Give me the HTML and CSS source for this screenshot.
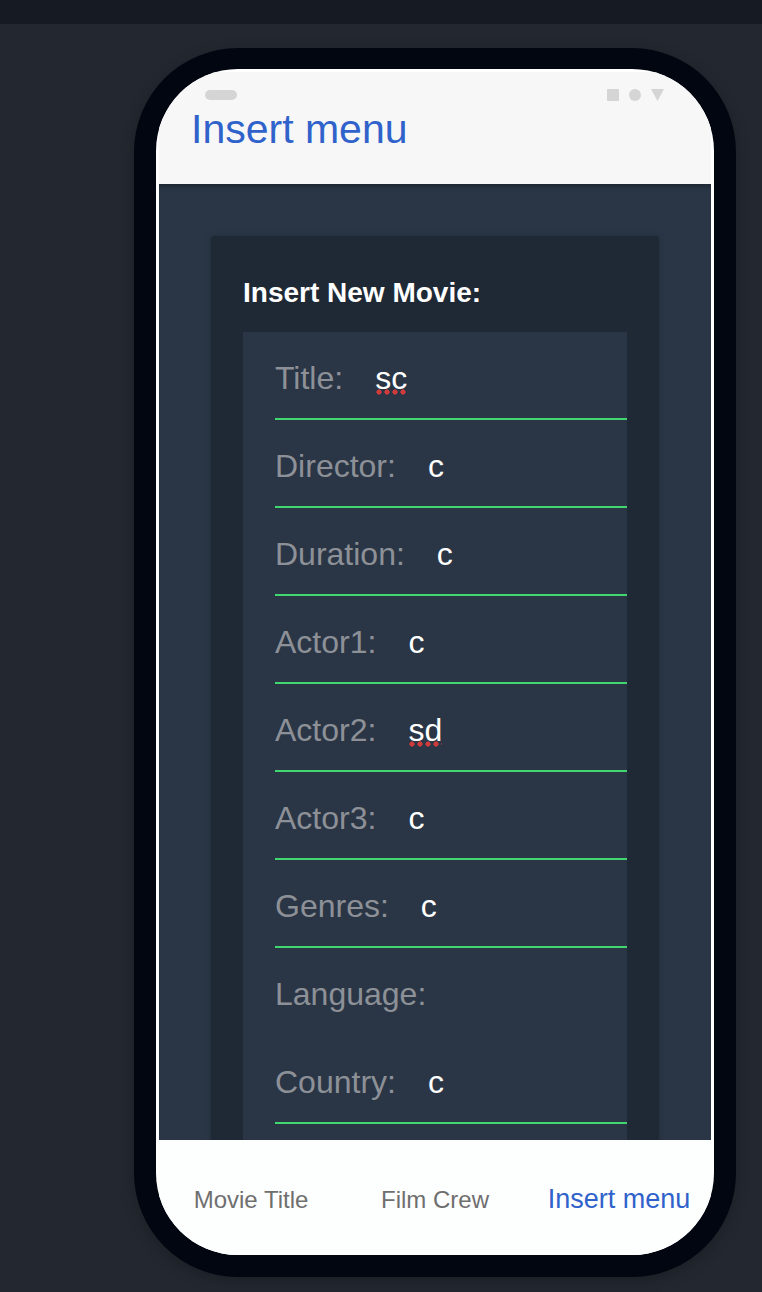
FILE: index.html
```html
<!DOCTYPE html>
<html lang="en">
<head>
<meta charset="utf-8">
<title>Insert menu</title>
<link rel="stylesheet" href="styles.css">
</head>
<body>
<div class="topbar"></div>
<div class="stage">
  <div class="phone">
    <div class="screen">
      <header class="app-header">
        <div class="status">
          <span class="pill"></span>
          <span class="status-icons">
            <span class="st-square"></span>
            <span class="st-circle"></span>
            <svg class="st-tri" width="13" height="12" viewBox="0 0 13 12"><path d="M0 0H13L6.5 12Z" fill="#d5d5d5"/></svg>
          </span>
        </div>
        <h1 class="app-title">Insert menu</h1>
      </header>
      <main class="content">
        <section class="card">
          <h2 class="card-title">Insert New Movie:</h2>
          <div class="form">
            <div class="row"><span class="label">Title:</span><span class="value misspelled">sc</span></div>
            <div class="row"><span class="label">Director:</span><span class="value">c</span></div>
            <div class="row"><span class="label">Duration:</span><span class="value">c</span></div>
            <div class="row"><span class="label">Actor1:</span><span class="value">c</span></div>
            <div class="row"><span class="label">Actor2:</span><span class="value misspelled">sd</span></div>
            <div class="row"><span class="label">Actor3:</span><span class="value">c</span></div>
            <div class="row"><span class="label">Genres:</span><span class="value">c</span></div>
            <div class="row row-empty"><span class="label">Language:</span><span class="value"></span></div>
            <div class="row"><span class="label">Country:</span><span class="value">c</span></div>
          </div>
        </section>
      </main>
      <nav class="tabbar">
        <span class="tab">Movie Title</span>
        <span class="tab">Film Crew</span>
        <span class="tab tab-active">Insert menu</span>
      </nav>
    </div>
  </div>
</div>
</body>
</html>
```

FILE: styles.css
```css
* { box-sizing: border-box; }

html, body {
  margin: 0;
  padding: 0;
}

body {
  background: #232830;
  font-family: "Liberation Sans", Arial, sans-serif;
  height: 1292px;
  overflow: hidden;
}

.topbar {
  height: 24px;
  background: #161a22;
}

.stage {
  padding: 24px 0 0 134px;
}

.phone {
  width: 602px;
  height: 1229px;
  background: #020611;
  border-radius: 104px;
  padding: 21px 22px 22px;
  box-shadow: 0 4px 14px rgba(0, 0, 0, 0.25);
}

.screen {
  height: 100%;
  background: #ffffff;
  border-radius: 82px;
  padding: 3px 3px 0;
  overflow: hidden;
  display: flex;
  flex-direction: column;
}

.app-header {
  height: 112px;
  flex: none;
  background: #f7f7f7;
  padding-top: 16px;
  position: relative;
  z-index: 1;
}

.status {
  height: 13px;
  display: flex;
  justify-content: space-between;
  align-items: center;
  padding: 0 47px 0 46px;
}

.pill {
  width: 32px;
  height: 10px;
  border-radius: 5px;
  background: #d5d5d5;
}

.status-icons {
  display: flex;
  align-items: center;
  gap: 10px;
}

.st-square {
  width: 12px;
  height: 12px;
  border-radius: 1px;
  background: #d5d5d5;
}

.st-circle {
  width: 12px;
  height: 12px;
  border-radius: 50%;
  background: #d5d5d5;
}

.st-tri {
  display: block;
}

.app-title {
  margin: 5px 0 0;
  padding-left: 32px;
  font-size: 41px;
  line-height: 46px;
  font-weight: 400;
  color: #3062cb;
}

.content {
  flex: 1;
  min-height: 0;
  overflow: hidden;
  background: #2a3646;
  padding: 52px 52px 0;
  box-shadow: inset 0 6px 5px -4px rgba(0, 0, 0, 0.35);
}

.card {
  background: #1e2935;
  border-radius: 4px;
  padding: 41px 32px 60px;
  box-shadow: 0 0 6px rgba(0, 0, 0, 0.18);
}

.card-title {
  margin: 0 0 23px;
  font-size: 28px;
  line-height: 32px;
  font-weight: 700;
  color: #ffffff;
}

.form {
  background: #2a3646;
  padding: 0 0 60px 32px;
}

.row {
  display: flex;
  align-items: baseline;
  padding: 28px 0 22px;
  border-bottom: 2px solid #40d670;
  font-size: 32px;
  line-height: 36px;
}

.row-empty {
  border-bottom-color: transparent;
}

.label {
  color: #8d9197;
  margin-right: 32px;
}

.value {
  color: #ffffff;
}

.misspelled {
  background-image: radial-gradient(circle at 4px 3px, #cf3a3a 2.3px, transparent 2.9px);
  background-size: 8px 6px;
  background-repeat: repeat-x;
  background-position: 0 calc(100% - 1px);
}

.tabbar {
  height: 115px;
  flex: none;
  background: #fdfefe;
  display: flex;
  align-items: baseline;
  padding-top: 43px;
}

.tab {
  flex: 1;
  text-align: center;
  font-size: 24px;
  line-height: 32px;
  color: #6f6f6f;
}

.tab-active {
  font-size: 27px;
  color: #3062cb;
}
```
